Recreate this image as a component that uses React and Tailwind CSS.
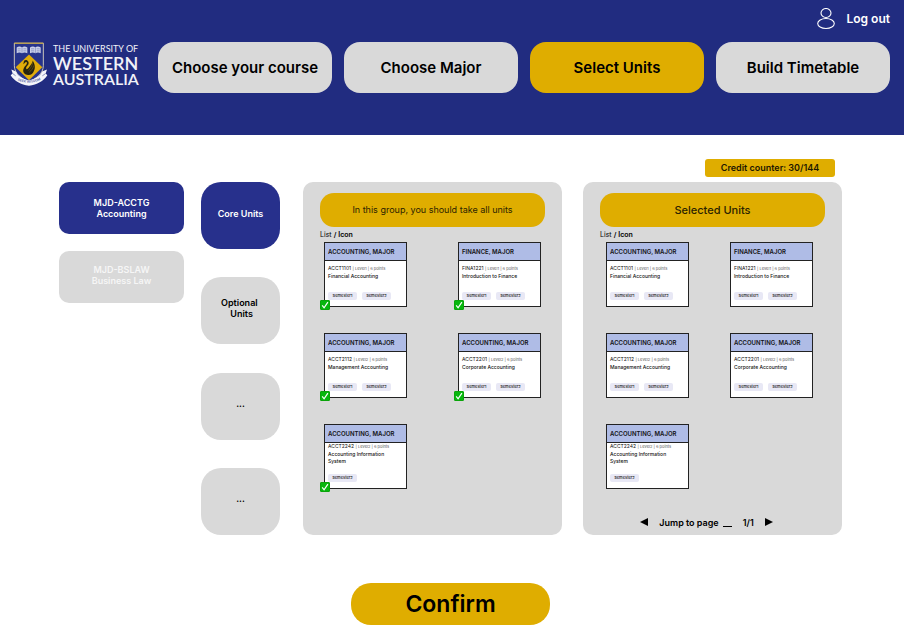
import React from "react";

const steps = [
  { label: "Choose your course" },
  { label: "Choose Major" },
  { label: "Select Units", active: true },
  { label: "Build Timetable" },
];

const units = [
  { code: "ACCT1101", level: "Level1", name: "Financial Accounting", area: "ACCOUNTING, MAJOR", semesters: ["Semester1", "Semester2"] },
  { code: "FINA1221", level: "Level1", name: "Introduction to Finance", area: "FINANCE, MAJOR", semesters: ["Semester1", "Semester2"] },
  { code: "ACCT2112", level: "Level2", name: "Management Accounting", area: "ACCOUNTING, MAJOR", semesters: ["Semester1", "Semester2"] },
  { code: "ACCT2201", level: "Level2", name: "Corporate Accounting", area: "ACCOUNTING, MAJOR", semesters: ["Semester1", "Semester2"] },
  { code: "ACCT2242", level: "Level2", name: "Accounting Information System", area: "ACCOUNTING, MAJOR", semesters: ["Semester2"], long: true },
];

function Crest() {
  return (
    <svg viewBox="30 42 114 134" className="h-[45px] w-[38px] shrink-0" aria-hidden="true">
      <path d="M43 45H130V112C130 138 108 150 86.500 162C65 150 43 138 43 112Z" fill="#27348b" stroke="#e9e2c4" strokeWidth="2.500" />
      <path d="M43 45H130" stroke="#d9aa10" strokeWidth="2.500" />
      <g fill="#ccd2ea">
        <path d="M50 58C55 54 61 54 66 57C71 54 77 54 82 58V75C77 72 71 72 66 75C61 72 55 72 50 75Z" />
        <path d="M90 58C95 54 101 54 106 57C111 54 117 54 122 58V75C117 72 111 72 106 75C101 72 95 72 90 75Z" />
      </g>
      <g stroke="#5b68ae" strokeWidth="1.600" fill="none">
        <path d="M66 57V75M106 57V75M53 62H62M53 68H62M70 62H79M70 68H79M93 62H102M93 68H102M110 62H119M110 68H119" />
      </g>
      <path d="M87 79L127 117L87 156L47 117Z" fill="#e0ac0a" />
      <path d="M71 103C71 96 77 94 82 97C88 101 87 108 82 113C78 117 77 121 80 123C84 123 87 117 91 112C95 107 98 103 98 97C104 106 107 118 102 128C99 138 91 142 81 140C70 138 67 128 72 119C75 113 81 109 81 104C80 100 76 101 75 104L70 108Z" fill="#26230f" />
      <path d="M98 104C96 114 91 121 85 127M101 112C99 121 94 127 88 132" stroke="#9a7b12" strokeWidth="1.400" fill="none" />
      <path d="M34 124L48 130C52 142 68 153 87 156C106 153 122 142 126 130L141 124L137 136L142 141C130 159 112 169 87 173C62 169 44 159 32 141L38 136Z" fill="#f4f5fa" />
      <path d="M38 136L47 143M137 136L127 143" stroke="#58649f" strokeWidth="2" />
      <path id="motto" d="M46 151C62 168 112 168 129 149" fill="none" />
      <text fontFamily="Inter, sans-serif" fontSize="10" fontWeight="600" fill="#5360a4" textAnchor="middle">
        <textPath href="#motto" startOffset="50%">SEEK WISDOM</textPath>
      </text>
    </svg>
  );
}

function Logo() {
  return (
    <a href="#" className="flex w-[129px] shrink-0 items-center gap-[5px] text-[#f1f2f8]">
      <Crest />
      <span className="flex flex-col whitespace-nowrap font-[Lato,sans-serif]">
        <span className="text-[9px] leading-[12px]">THE UNIVERSITY OF</span>
        <span className="text-[18px] font-semibold leading-[16px]">WESTERN</span>
        <span className="text-[16px] font-semibold leading-[16px]">AUSTRALIA</span>
      </span>
    </a>
  );
}

function UnitCard({ unit, selectable }) {
  return (
    <article className="relative flex h-[65px] w-[83px] flex-col border border-[#222] bg-white text-[#111]">
      <h3 className="flex h-[18px] shrink-0 items-center border-b border-[#222] bg-[#afbce6] px-[3px] text-[6px] font-semibold">
        {unit.area}
      </h3>
      <div className={`flex grow flex-col items-start px-[3px] pb-1.5 ${unit.long ? "" : "pt-1"}`}>
        <p className="whitespace-nowrap text-[5px] leading-[7px]">
          {unit.code} <span className="text-[4px] text-[#555]">| {unit.level} | 6 points</span>
        </p>
        <p className="mt-px w-[68px] text-[5px] font-medium leading-[7px]">{unit.name}</p>
        <div className="mt-auto flex gap-[5px]">
          {unit.semesters.map((s) => (
            <span key={s} className="flex h-2 w-[29px] items-center justify-center rounded-[2px] bg-[#e8e8f5] text-[4px] font-medium">
              {s}
            </span>
          ))}
        </div>
      </div>
      {selectable && (
        <label className="absolute -bottom-1 -left-[5px] size-[10px]">
          <input type="checkbox" defaultChecked aria-label={unit.name} className="peer block size-[10px] appearance-none rounded-[1px] border border-[#0aa40a] bg-white checked:bg-[#06b70d]" />
          <svg viewBox="0 0 10 10" className="pointer-events-none absolute inset-0 hidden peer-checked:block" aria-hidden="true">
            <path d="M2.200 5.300L4.100 7.800L7.900 2.200" fill="none" stroke="#fff" strokeWidth="1.200" />
          </svg>
        </label>
      )}
    </article>
  );
}

function Panel({ title, titleClass, gridClass, selectable, children }) {
  return (
    <section className="flex min-h-[353px] flex-1 flex-col rounded-[10px] bg-[#d9d9d9] px-[17px] pt-[11px]">
      <h2 className={`flex h-[34px] shrink-0 items-center justify-center rounded-[14px] bg-[#dfad00] text-[#2b2300] ${titleClass}`}>{title}</h2>
      <div className="flex h-[15px] items-center gap-[2px] text-[7px] leading-none">
        <button type="button">List</button>
        <span className="font-semibold">/</span>
        <button type="button" className="font-semibold">Icon</button>
      </div>
      <div className={`grid grid-cols-[83px_83px] justify-between gap-y-[26px] ${gridClass}`}>
        {units.map((u) => (
          <UnitCard key={u.code} unit={u} selectable={selectable} />
        ))}
      </div>
      {children}
    </section>
  );
}

export default function App() {
  return (
    <div className="min-h-screen bg-white font-[Inter,sans-serif] text-black">
      <header className="bg-[#212c80] pb-[42px] pl-[10px] pr-[14px] pt-2">
        <div className="flex justify-end">
          <button type="button" className="flex h-[22px] items-center gap-[11px] text-[12px] font-semibold text-white">
            <svg viewBox="0 0 18 22" className="h-[22px] w-[18px]" fill="none" stroke="#fff" strokeWidth="1.100" aria-hidden="true">
              <ellipse cx="9" cy="5" rx="5" ry="4.500" />
              <ellipse cx="9" cy="15.500" rx="8.300" ry="5" />
            </svg>
            Log out
          </button>
        </div>
        <div className="mt-3 flex items-start gap-[19px]">
          <Logo />
          <nav className="flex flex-1 gap-3">
            {steps.map((s) => (
              <button
                key={s.label}
                type="button"
                className={`h-[51px] flex-1 whitespace-nowrap rounded-[16px] pt-0.5 text-[15px] font-semibold ${s.active ? "bg-[#dfad00]" : "bg-[#d9d9d9]"}`}
              >
                {s.label}
              </button>
            ))}
          </nav>
        </div>
      </header>

      <main className="pb-4 pl-[59px] pr-[62px] pt-6">
        <div className="flex justify-end pr-[7px]">
          <p className="flex h-[18px] w-[130px] items-center justify-center rounded-[3px] bg-[#dfad00] text-[9px] font-semibold text-[#1c1700]">
            Credit counter: 30/144
          </p>
        </div>

        <div className="mt-[5px] flex">
          <div className="flex w-[125px] shrink-0 flex-col gap-[17px] text-[9px] font-semibold leading-[11px] text-white">
            <button type="button" className="h-[52px] rounded-[10px] bg-[#27308c]">
              MJD-ACCTG<br />Accounting
            </button>
            <button type="button" className="h-[52px] rounded-[10px] bg-[#d9d9d9] pb-1 text-[#f6f6f6]">
              MJD-BSLAW<br />Business Law
            </button>
          </div>

          <div className="ml-[17px] flex w-[79px] shrink-0 flex-col justify-between text-[9px] font-semibold leading-[11px]">
            <button type="button" className="h-[67px] rounded-[20px] bg-[#27308c] pb-1 text-white">Core Units</button>
            <button type="button" className="h-[67px] whitespace-pre rounded-[20px] bg-[#d9d9d9] pb-1.5">{"Optional \n Units"}</button>
            <button type="button" className="h-[67px] rounded-[20px] bg-[#d9d9d9] pb-1.5">...</button>
            <button type="button" className="h-[67px] rounded-[20px] bg-[#d9d9d9] pb-1.5">...</button>
          </div>

          <div className="ml-[23px] flex flex-1 gap-[21px]">
            <Panel title="In this group, you should take all units" titleClass="text-[9px] font-normal" gridClass="px-1" selectable />
            <Panel title="Selected Units" titleClass="text-[11px] font-medium" gridClass="pl-1.5 pr-3">
              <div className="mt-auto flex h-[26px] items-center justify-center gap-[11px] pr-3 text-[9px] font-semibold leading-none">
                <button type="button" aria-label="Previous page">
                  <svg viewBox="0 0 8 8" className="size-2" aria-hidden="true"><path d="M8 0V8L0 4Z" /></svg>
                </button>
                <label className="flex items-center gap-1">
                  Jump to page
                  <input type="text" className="h-[9px] w-[9px] border-b border-black bg-transparent outline-none" />
                </label>
                <span>1/1</span>
                <button type="button" aria-label="Next page">
                  <svg viewBox="0 0 8 8" className="size-2" aria-hidden="true"><path d="M0 0V8L8 4Z" /></svg>
                </button>
              </div>
            </Panel>
          </div>
        </div>

        <div className="mt-12 flex justify-center">
          <button type="button" className="h-[42px] w-[199px] rounded-[20px] bg-[#dfad00] text-[23px] font-semibold">
            Confirm
          </button>
        </div>
      </main>
    </div>
  );
}
